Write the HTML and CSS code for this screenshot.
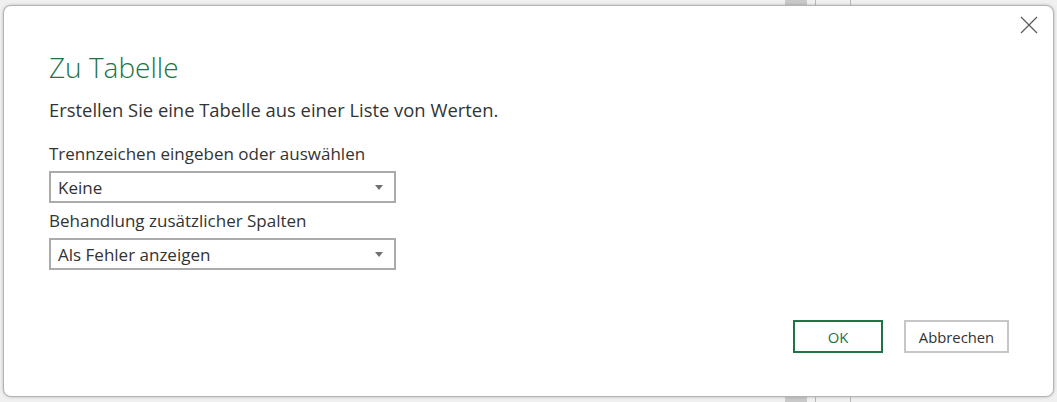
FILE: index.html
```html
<!DOCTYPE html>
<html lang="de">
<head>
<meta charset="utf-8">
<title>Zu Tabelle</title>
<link rel="stylesheet" href="styles.css">
</head>
<body>
<div class="backdrop">
  <div class="bg-strip"></div>
  <div class="bg-line bg-line-1"></div>
  <div class="bg-line bg-line-2"></div>
</div>
<div class="dialog">
  <button class="close" aria-label="Schließen">
    <svg width="18" height="18" viewBox="0 0 18 18"><path d="M1 1 L17 17 M17 1 L1 17" stroke="#5a5a5a" stroke-width="1.2" fill="none"/></svg>
  </button>
  <h1 class="title">Zu Tabelle</h1>
  <p class="subtitle">Erstellen Sie eine Tabelle aus einer Liste von Werten.</p>
  <div class="field field-first">
    <label class="label">Trennzeichen eingeben oder auswählen</label>
    <div class="select"><span>Keine</span><span class="arrow"></span></div>
  </div>
  <div class="field field-second">
    <label class="label">Behandlung zusätzlicher Spalten</label>
    <div class="select"><span>Als Fehler anzeigen</span><span class="arrow"></span></div>
  </div>
  <div class="actions">
    <button class="btn btn-ok">OK</button>
    <button class="btn btn-cancel">Abbrechen</button>
  </div>
</div>
</body>
</html>
```
FILE: styles.css
```css
html, body {
  margin: 0;
  padding: 0;
  height: 100%;
  background: #f0f0f0;
  overflow: hidden;
}
body {
  font-family: "Open Sans", "Noto Sans", sans-serif;
  color: #333;
  padding: 5px 0 0 3px;
  box-sizing: border-box;
  position: relative;
}
.backdrop {
  position: absolute;
  inset: 0;
}
.bg-strip {
  position: absolute;
  left: 785px;
  top: 0;
  width: 22px;
  height: 100%;
  background: #c9c9c9;
}
.bg-line {
  position: absolute;
  top: 0;
  width: 1px;
  height: 100%;
  background: #b8b8b8;
}
.bg-line-1 { left: 815px; }
.bg-line-2 { left: 850px; }
.dialog {
  position: relative;
  width: 1051px;
  height: 392px;
  box-sizing: border-box;
  background: #fff;
  border: 1px solid #b4b4b4;
  border-radius: 8px;
  box-shadow: 0 0 3px rgba(0,0,0,0.25);
  padding: 41px 45px 0 45px;
  display: flex;
  flex-direction: column;
}
.close {
  position: absolute;
  top: 9px;
  right: 14px;
  width: 20px;
  height: 20px;
  padding: 0;
  border: 0;
  background: none;
  display: flex;
  align-items: center;
  justify-content: center;
}
.title {
  margin: 0;
  font-weight: 300;
  font-size: 28px;
  line-height: 40px;
  color: #217346;
}
.subtitle {
  margin: 10px 0 0;
  font-size: 18.4px;
  line-height: 26px;
  color: #333;
}
.field {
  display: flex;
  flex-direction: column;
}
.field-first { margin-top: 20px; }
.field-second { margin-top: 7px; }
.label {
  font-size: 17px;
  line-height: 22px;
  color: #333;
}
.select {
  margin-top: 6px;
  width: 347px;
  height: 32px;
  box-sizing: border-box;
  border: 2px solid #ababab;
  display: flex;
  align-items: center;
  justify-content: space-between;
  padding: 0 11px 0 7px;
  font-size: 17px;
  color: #333;
}
.arrow {
  width: 0;
  height: 0;
  border-left: 4.5px solid transparent;
  border-right: 4.5px solid transparent;
  border-top: 5px solid #707070;
}
.actions {
  margin-top: auto;
  margin-bottom: 43px;
  display: flex;
  justify-content: flex-end;
  gap: 21px;
  margin-right: -1px;
}
.btn {
  font-family: "Open Sans", "Noto Sans", sans-serif;
  height: 33px;
  box-sizing: border-box;
  background: #fff;
  font-size: 14.8px;
  color: #333;
  padding: 0;
}
.btn-ok {
  width: 90px;
  border: 2px solid #217346;
  color: #217346;
}
.btn-cancel {
  width: 105px;
  border: 2px solid #c6c6c6;
}
```
